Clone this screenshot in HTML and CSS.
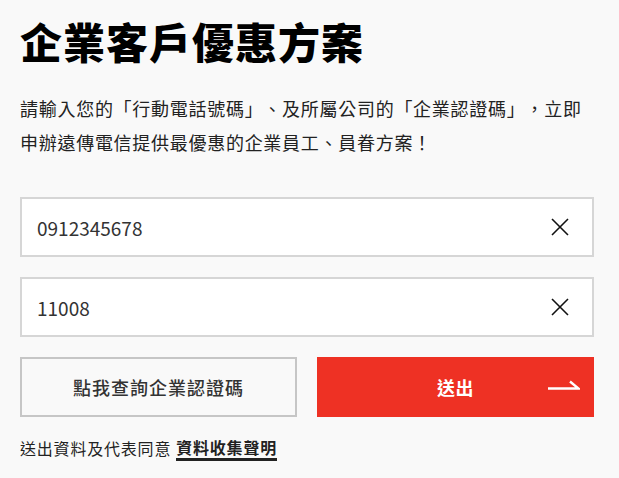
FILE: index.html
```html
<!DOCTYPE html>
<html lang="zh-Hant">
<head>
<meta charset="utf-8">
<link rel="stylesheet" href="styles.css">
</head>
<body>
<main class="page">
  <h1 class="title">企業客戶優惠方案</h1>
  <p class="desc">請輸入您的「行動電話號碼」、及所屬公司的「企業認證碼」，立即申辦遠傳電信提供最優惠的企業員工、員眷方案！</p>
  <form class="form">
    <div class="field">
      <span class="value">0912345678</span>
      <span class="clear"><svg width="18" height="18" viewBox="0 0 18 18"><path d="M1 1L17 17M17 1L1 17" stroke="#111" stroke-width="1.6" fill="none"/></svg></span>
    </div>
    <div class="field">
      <span class="value">11008</span>
      <span class="clear"><svg width="18" height="18" viewBox="0 0 18 18"><path d="M1 1L17 17M17 1L1 17" stroke="#111" stroke-width="1.6" fill="none"/></svg></span>
    </div>
    <div class="actions">
      <button type="button" class="btn btn-outline">點我查詢企業認證碼</button>
      <button type="button" class="btn btn-primary">送出<span class="arrow"><svg width="32" height="10" viewBox="0 0 32 10"><path d="M0 8.5H30.5L22 1.5" stroke="#fff" stroke-width="2.4" fill="none" stroke-linejoin="miter"/></svg></span></button>
    </div>
  </form>
  <div class="note"><span>送出資料及代表同意</span><span class="link">資料收集聲明</span></div>
</main>
</body>
</html>
```
FILE: styles.css
```css
* { box-sizing: border-box; }
html, body { margin: 0; padding: 0; background: #f9f9f9; }
body {
  font-family: "Noto Sans CJK TC", "Noto Sans", sans-serif;
  color: #222;
  text-spacing-trim: space-all;
}
.page {
  width: 574px;
  margin-left: 20px;
  padding-top: 15px;
}
.title {
  margin: 0;
  font-size: 42px;
  line-height: 52px;
  font-weight: 900;
  letter-spacing: 1px;
  color: #000;
}
.desc {
  margin: 24px 0 0;
  font-size: 18px;
  line-height: 34px;
  letter-spacing: 0.72px;
  color: #222;
}
.form {
  margin-top: 38px;
  display: flex;
  flex-direction: column;
  gap: 20px;
}
.field {
  height: 60px;
  background: #fff;
  border: 2px solid #d6d6d6;
  display: flex;
  align-items: center;
  justify-content: space-between;
  padding: 0 23px 0 15px;
}
.value {
  font-size: 19px;
  color: #333;
}
.clear { display: flex; }
.actions {
  display: grid;
  grid-template-columns: 1fr 1fr;
  gap: 20px;
}
.btn {
  height: 60px;
  font-family: inherit;
  font-size: 18px;
  cursor: pointer;
  position: relative;
}
.btn-outline {
  background: #f9f9f9;
  border: 2px solid #c6c6c6;
  color: #333;
  font-weight: 500;
  letter-spacing: 1px;
}
.btn-primary {
  background: #ee3124;
  border: none;
  color: #fff;
  font-weight: 700;
  letter-spacing: 0.5px;
}
.arrow {
  position: absolute;
  right: 14px;
  top: 23px;
  display: flex;
}
.note {
  margin-top: 19px;
  display: flex;
  align-items: flex-start;
  gap: 5px;
  font-size: 16px;
  line-height: 24px;
  letter-spacing: 0.8px;
  color: #222;
}
.link {
  font-weight: 700;
  color: #222;
  line-height: 22px;
  border-bottom: 3px solid #222;
}
```
